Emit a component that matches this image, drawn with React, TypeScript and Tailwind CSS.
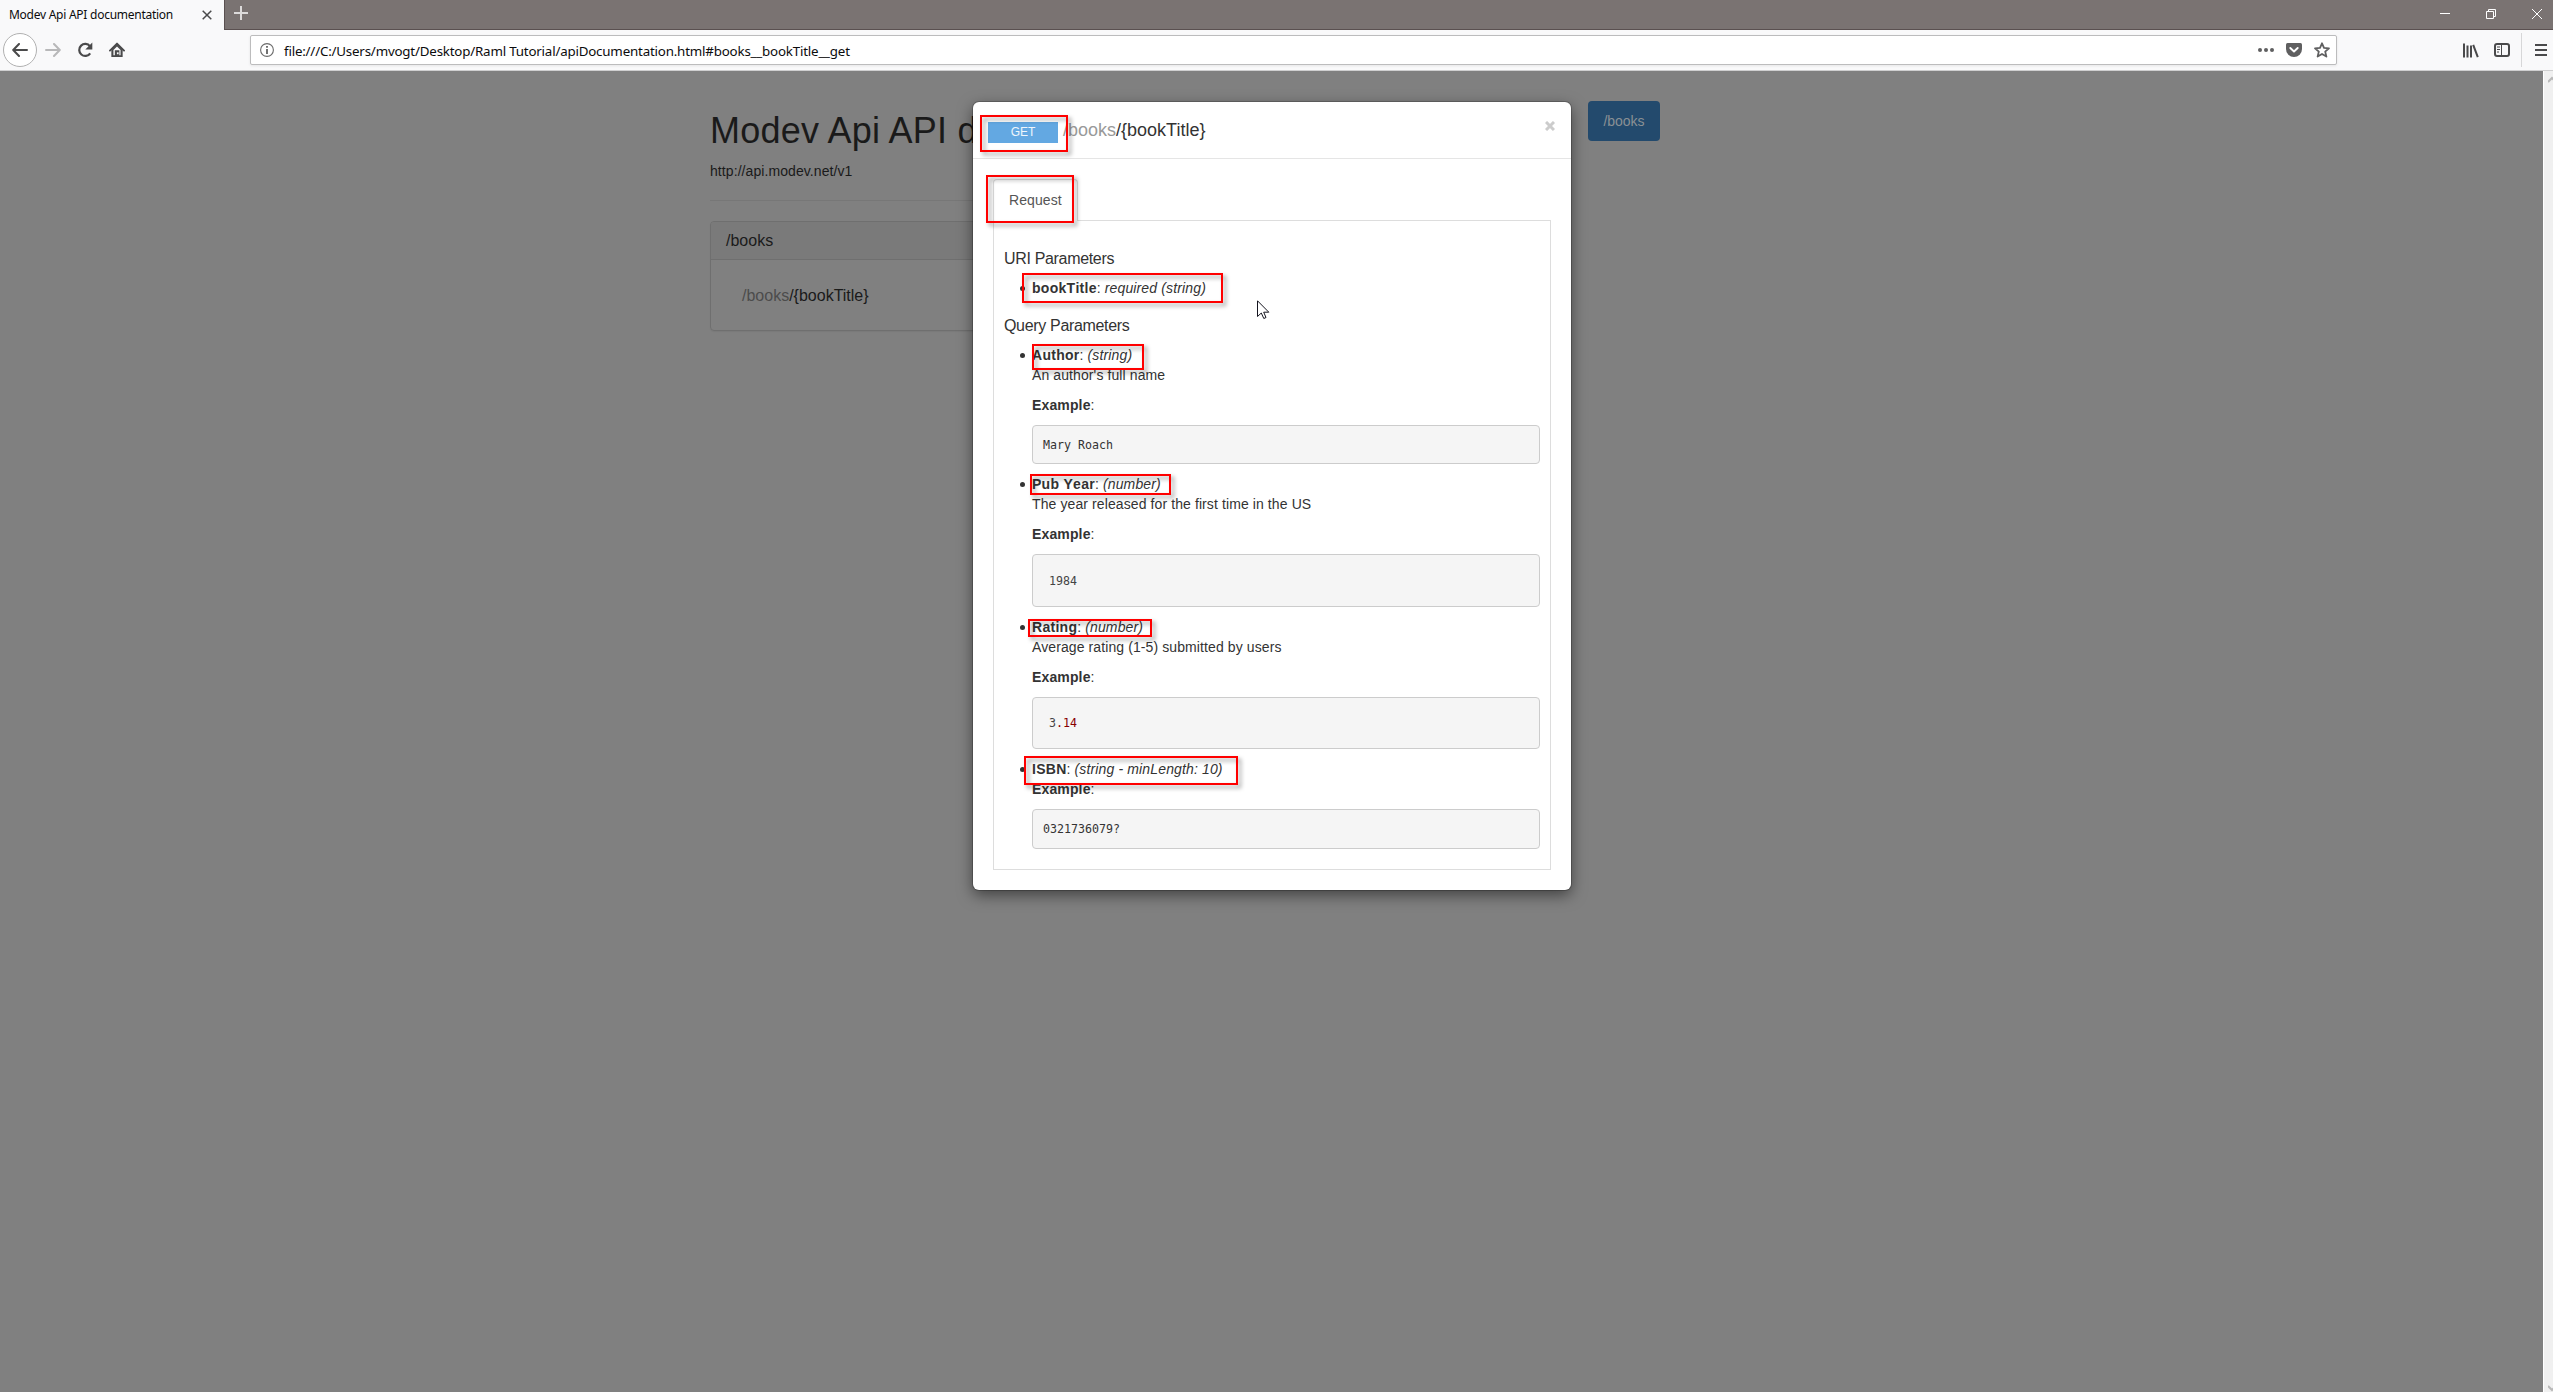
import React from "react";

const Frame = ({ className }: { className: string }) => (
  <div className={`absolute border-2 border-[#ff0000] drop-shadow-[3px_3px_2px_rgba(0,0,0,0.4)] ${className}`} />
);

function Titlebar() {
  return (
    <div className="flex h-[30px] bg-[#7a7372]">
      <div className="flex w-[224px] items-center justify-between bg-[#f9f9fa] pl-[9px] pr-[12px]">
        <span className="whitespace-nowrap font-['Noto_Sans','Open_Sans',sans-serif] text-[12px] leading-[28px] tracking-[-0.26px] text-[#0c0c0d]">
          Modev Api API documentation
        </span>
        <svg width="10" height="10" viewBox="0 0 10 10" stroke="#4a4a4b" strokeWidth="1.5">
          <path d="M.7 .7L9.3 9.3M9.3 .7L.7 9.3" />
        </svg>
      </div>
      <div className="flex flex-1 items-start justify-between border-b border-l border-[#5a5050]">
        <svg className="ml-[9px] mt-[6px]" width="14" height="14" viewBox="0 0 14 14" stroke="#dcdada" strokeWidth="2">
          <path d="M0 7H14M7 0V14" />
        </svg>
        <div className="mr-[11px] mt-[9px] flex gap-[36px]">
          <svg width="10" height="10" viewBox="0 0 10 10" stroke="#fff"><path d="M0 4.5H10" /></svg>
          <svg width="10" height="10" viewBox="0 0 10 10" stroke="#fff" fill="none"><path d="M.5 2.5H7.5V9.5H.5ZM2.5 2.5V.5H9.5V7.5H7.5" /></svg>
          <svg width="10" height="10" viewBox="0 0 10 10" stroke="#fff"><path d="M0 0L10 10M10 0L0 10" /></svg>
        </div>
      </div>
    </div>
  );
}

function Toolbar() {
  return (
    <div className="flex h-[41px] items-center border-b border-[#cfcfd0] bg-[#f9f9fa]">
      <div className="ml-[3px] flex h-[34px] w-[34px] shrink-0 items-center justify-center rounded-full border border-[#b1b1b1] bg-white">
        <svg width="16" height="14" viewBox="0 0 16 14" fill="none" stroke="#4a4a4b" strokeWidth="2" strokeLinecap="round" strokeLinejoin="round"><path d="M15 7H1.5M7 1L1.2 7L7 13" /></svg>
      </div>
      <svg className="ml-[8px]" width="16" height="14" viewBox="0 0 16 14" fill="none" stroke="#b8b8b9" strokeWidth="2" strokeLinecap="round" strokeLinejoin="round"><path d="M1 7H14.5M9 1L14.8 7L9 13" /></svg>
      <svg className="ml-[16px]" width="17" height="16" viewBox="0 0 17 16"><path d="M13.2 11.3A6 6 0 1 1 13 4.3" fill="none" stroke="#4a4a4b" strokeWidth="2.2" /><path d="M15.3 .5V7.5H8.3Z" fill="#4a4a4b" /></svg>
      <svg className="ml-[15px]" width="16" height="16" viewBox="0 0 17 16"><path d="M1 8.6L8.5 1.2L16 8.6" fill="none" stroke="#4a4a4b" strokeWidth="2" strokeLinecap="round" strokeLinejoin="round" /><path d="M2.5 8L8.5 2L14.5 8V15.5H2.5Z" fill="#4a4a4b" /><path d="M4.7 8L8.5 4.2L12.3 8V13.5H11V8.2H6.2V13.5H4.7Z" fill="#f9f9fa" /><rect x="8.4" y="10.5" width="1.8" height="2" fill="#f9f9fa" /></svg>
      <div className="ml-[125px] flex h-[30px] w-[2087px] shrink-0 items-center rounded-[2px] border border-[#bcbcbd] bg-white pl-[9px] pr-[6px] shadow-[0_1px_3px_rgba(0,0,0,0.08)]">
        <svg width="14" height="14" viewBox="0 0 14 14"><circle cx="7" cy="7" r="6.4" fill="none" stroke="#6b6b6b" strokeWidth="1.1" /><path d="M7 3V4.8M7 6V11" stroke="#6b6b6b" strokeWidth="1.9" /></svg>
        <span className="ml-[10px] mt-[2px] flex-1 whitespace-nowrap font-['Noto_Sans','Open_Sans',sans-serif] text-[13.33px] leading-[26px] tracking-[-0.19px] text-[#0c0c0d]">
          file:///C:/Users/mvogt/Desktop/Raml Tutorial/apiDocumentation.html#books__bookTitle__get
        </span>
        <svg width="16" height="16" viewBox="0 0 16 16" fill="#5f5f60"><circle cx="2" cy="8" r="2" /><circle cx="8" cy="8" r="2" /><circle cx="14" cy="8" r="2" /></svg>
        <svg className="ml-[12px]" width="16" height="16" viewBox="0 0 16 16"><path d="M1.5 1H14.5Q16 1 16 2.5V7A8 8 0 0 1 0 7V2.500Q0 1 1.500 1Z" fill="#5f5f60" /><path d="M4.300 6L8 9.500L11.700 6" fill="none" stroke="#fff" strokeWidth="1.900" strokeLinecap="round" strokeLinejoin="round" /></svg>
        <svg className="ml-[12px]" width="16" height="16" viewBox="0 0 16 16"><path d="M8 1.300L10 5.900L15 6.300L11.200 9.600L12.400 14.600L8 11.900L3.600 14.600L4.800 9.600L1 6.300L6 5.900Z" fill="none" stroke="#5f5f60" strokeWidth="1.800" strokeLinejoin="round" /></svg>
      </div>
      <svg className="ml-[126px]" width="16" height="15" viewBox="0 0 16 15" stroke="#4a4a4b" strokeWidth="2"><path d="M1 .5V14.500M4.500 2.500V14.500M8 2.500V14.500M10.200 1.800L14.800 14.200" /></svg>
      <svg className="ml-[15px]" width="16" height="14" viewBox="0 0 16 14"><rect x="1" y="1" width="14" height="12" rx="2" fill="none" stroke="#4a4a4b" strokeWidth="2" /><path d="M7.500 1V13M3 4H6M3 6.500H6M3 9H5" stroke="#4a4a4b" /></svg>
      <div className="ml-[11px] h-[34px] w-px bg-[#d7d7d8]" />
      <svg className="ml-[13px]" width="12" height="12" viewBox="0 0 12 12" stroke="#4a4a4b" strokeWidth="2"><path d="M0 1H12M0 6H12M0 11H12" /></svg>
    </div>
  );
}

function PageBehind() {
  return (
    <div className="flex items-start pl-[710px] pt-[30px]">
      <div className="w-[833px]">
        <h1 className="mt-[10px] h-[40px] whitespace-nowrap text-[36px] leading-[40px] tracking-[0.24px] text-[#1a1a1a]">Modev Api API documentation</h1>
        <p className="mt-[10px] text-[14px] leading-[20px] tracking-[0.08px] text-[#1a1a1a]">http://api.modev.net/v1</p>
        <div className="mt-[19px] h-px bg-[#777]" />
        <div className="mt-[20px] rounded-[4px] border border-[#6f6f6f] shadow-[0_1px_1px_rgba(0,0,0,0.05)]">
          <div className="h-[38px] rounded-t-[3px] border-b border-[#6f6f6f] bg-[#7a7a7a] pl-[15px] text-[16px] leading-[38px] text-[#1a1a1a]">/books</div>
          <div className="h-[70px] pl-[31px] text-[16px] leading-[71px] text-[#1a1a1a]">
            <span className="text-[#4c4c4c]">/books</span>/{"{"}bookTitle{"}"}
          </div>
        </div>
      </div>
      <div className="ml-[45px] h-[40px] w-[72px] rounded-[4px] bg-[#234a6d] text-center text-[14px] leading-[40px] text-[#8a9094]">/books</div>
    </div>
  );
}

type Param = { name: string; type: string; desc?: string; pre?: string; red?: string; box?: string };
const query: Param[] = [
  { name: "Author", type: "(string)", desc: "An author's full name", pre: "Mary Roach", box: "h-[39px] pl-[10px] leading-[38px]" },
  { name: "Pub Year", type: "(number)", desc: "The year released for the first time in the US", pre: "1984", box: "h-[53px] pl-[16px] leading-[52px] text-[#444]" },
  { name: "Rating", type: "(number)", desc: "Average rating (1-5) submitted by users", pre: "3", red: ".14", box: "h-[52px] pl-[16px] leading-[51px] text-[#444]" },
  { name: "ISBN", type: "(string - minLength: 10)", pre: "0321736079?", box: "h-[40px] pl-[10px] leading-[38px]" },
];

function Item({ p }: { p: Param }) {
  return (
    <li className="relative tracking-[0.1px] before:absolute before:left-[-12px] before:top-[8px] before:h-[5px] before:w-[5px] before:rounded-full before:bg-[#333] before:content-['']">
      <div><b className="tracking-[0.28px] [font-kerning:none]">{p.name}</b>: <i className="tracking-[0.14px]">{p.type}</i></div>
      {p.desc && <div>{p.desc}</div>}
      {p.pre && (
        <>
          <div className={p.desc ? "mt-[10px]" : ""}><b className="tracking-[0.14px]">Example</b>:</div>
          <pre className={`mb-[10px] mt-[10px] rounded-[4px] border border-[#ccc] bg-[#f5f5f5] font-['DejaVu_Sans_Mono',monospace] text-[11.63px] tracking-normal ${p.box}`}>
            {p.pre}{p.red && <span className="text-[#880000]">{p.red}</span>}
          </pre>
        </>
      )}
    </li>
  );
}

function Modal() {
  return (
    <div className="absolute left-[973px] top-[102px] h-[788px] w-[598px] rounded-[6px] bg-white text-[14px] leading-[20px] text-[#333] shadow-[0_5px_15px_rgba(0,0,0,0.5),0_0_0_1px_rgba(0,0,0,0.2)]">
      <div className="flex h-[57px] items-start border-b border-[#e5e5e5] pl-[15px] pr-[16px] pt-[20px]">
        <div className="h-[21px] w-[70px] bg-[#63a8e2] text-center text-[12px] leading-[20px] text-white/90">GET</div>
        <h4 className="ml-[5px] mt-[-4px] text-[18px] leading-[24px]"><span className="text-[#999]">/books</span>/{"{"}bookTitle{"}"}</h4>
        <svg className="ml-auto mt-[-1px]" width="10" height="10" viewBox="0 0 10 10" stroke="#ccc" strokeWidth="3"><path d="M1 1L9 9M9 1L1 9" /></svg>
      </div>
      <div className="px-[20px] pt-[20px]">
        <div className="flex h-[42px]">
          <div className="w-[85px] rounded-t-[4px] border border-b-0 border-[#ddd] pl-[15px] leading-[41px] tracking-[0.08px] text-[#555]">Request</div>
          <div className="flex-1 border-b border-[#ddd]" />
        </div>
        <div className="h-[649px] border border-t-0 border-[#ddd] px-[10px] pt-[28px]">
          <h3 className="text-[16px] leading-[20px] tracking-[-0.33px]">URI Parameters</h3>
          <ul className="mt-[9px] pl-[28px]"><Item p={{ name: "bookTitle", type: "required (string)" }} /></ul>
          <h3 className="mt-[18px] text-[16px] leading-[20px] tracking-[-0.33px]">Query Parameters</h3>
          <ul className="mt-[9px] pl-[28px]">{query.map((p) => <Item key={p.name} p={p} />)}</ul>
        </div>
      </div>
    </div>
  );
}

export default function App() {
  return (
    <div className="relative flex h-[1392px] w-[2553px] flex-col overflow-hidden bg-[#808080] font-['Liberation_Sans',Arial,sans-serif]">
      <Titlebar />
      <Toolbar />
      <div className="flex min-h-0 flex-1">
        <div className="flex-1"><PageBehind /></div>
        <div className="flex w-[10px] flex-col justify-between overflow-hidden border-l border-white bg-[#f0f0f0] pl-[4px] pt-[5px]">
          <svg className="shrink-0" width="5" height="8" viewBox="0 0 5 8" fill="none" stroke="#b8b8b8" strokeWidth="2"><path d="M0 6L4 2L8 6" /></svg>
          <svg className="shrink-0" width="5" height="7" viewBox="0 0 5 7" fill="none" stroke="#b8b8b8" strokeWidth="2"><path d="M0 1L4 5L8 1" /></svg>
        </div>
      </div>
      <Modal />
      <Frame className="left-[980px] top-[115px] h-[37px] w-[88px]" />
      <Frame className="left-[986px] top-[175px] h-[48px] w-[88px]" />
      <Frame className="left-[1022px] top-[273px] h-[30px] w-[201px]" />
      <Frame className="left-[1032px] top-[344px] h-[26px] w-[112px]" />
      <Frame className="left-[1030px] top-[474px] h-[21px] w-[141px]" />
      <Frame className="left-[1028px] top-[619px] h-[18px] w-[124px]" />
      <Frame className="left-[1024px] top-[756px] h-[29px] w-[214px]" />
      <svg className="absolute left-[1257px] top-[300px]" width="13" height="20" viewBox="0 0 13 20"><path d="M.5 .8V16.500L4.300 13L6.800 18.500L9 17.500L6.700 12.200H11.800Z" fill="#fff" stroke="#15151f" strokeWidth="1" /></svg>
    </div>
  );
}
